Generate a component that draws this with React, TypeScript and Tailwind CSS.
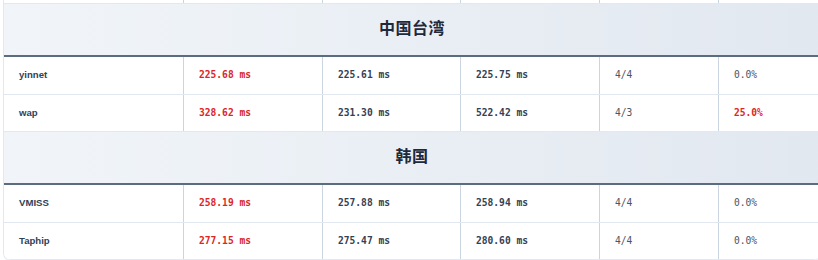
import React from "react";

type Row = {
  name: string;
  avg: string;
  min: string;
  max: string;
  recv: string;
  loss: string;
  lossBad?: boolean;
};

type Section = { title: string; rows: Row[] };

const sections: Section[] = [
  {
    title: "中国台湾",
    rows: [
      { name: "yinnet", avg: "225.68 ms", min: "225.61 ms", max: "225.75 ms", recv: "4/4", loss: "0.0%" },
      { name: "wap", avg: "328.62 ms", min: "231.30 ms", max: "522.42 ms", recv: "4/3", loss: "25.0%", lossBad: true },
    ],
  },
  {
    title: "韩国",
    rows: [
      { name: "VMISS", avg: "258.19 ms", min: "257.88 ms", max: "258.94 ms", recv: "4/4", loss: "0.0%" },
      { name: "Taphip", avg: "277.15 ms", min: "275.47 ms", max: "280.60 ms", recv: "4/4", loss: "0.0%" },
    ],
  },
];

const cols = "grid grid-cols-[180px_139px_138px_139px_119px_1fr]";
const cell = "flex items-center pl-[15px] border-r border-[#cbd5e1] last:border-r-0";
const mono = "font-['DejaVu_Sans_Mono',monospace] text-[9.6px]";

function DataRow({ r }: { r: Row }) {
  return (
    <div className={`${cols} h-[37.5px] border-b border-[#e2e8f0] bg-white`}>
      <div className={`${cell} font-['Liberation_Sans',Arial,sans-serif] text-[9.6px] font-bold text-[#334155]`}>
        {r.name}
      </div>
      <div className={`${cell} ${mono} font-bold text-[#dc2626]`}>{r.avg}</div>
      <div className={`${cell} ${mono} font-bold text-[#334155]`}>{r.min}</div>
      <div className={`${cell} ${mono} font-bold text-[#334155]`}>{r.max}</div>
      <div className={`${cell} ${mono} text-[#4b5563]`}>{r.recv}</div>
      <div className={`${cell} ${mono} ${r.lossBad ? "font-bold text-[#dc2626]" : "text-[#4b5563]"}`}>
        {r.loss}
      </div>
    </div>
  );
}

export default function App() {
  return (
    <div className="w-[818px] h-[260px] overflow-hidden bg-white">
      <div className="ml-[3px] w-[818px] border-x border-b border-[#e2e8f0] rounded-b-lg overflow-hidden">
        {/* tail of the previous section */}
        <div className={`${cols} h-[4px] border-b border-[#e2e8f0]`}>
          <div className="border-r border-[#cbd5e1]" />
          <div className="border-r border-[#cbd5e1]" />
          <div className="border-r border-[#cbd5e1]" />
          <div className="border-r border-[#cbd5e1]" />
          <div className="border-r border-[#cbd5e1]" />
          <div />
        </div>
        {sections.map((s) => (
          <div key={s.title}>
            <div className="h-[53px] pb-[5px] flex items-center justify-center bg-gradient-to-r from-[#f1f5f9] to-[#e2e8f0] border-b-2 border-[#5b6b80]">
              <span className="font-['Noto_Sans_CJK_SC',sans-serif] text-[16px] font-bold text-[#1e293b] tracking-[0.5px]">
                {s.title}
              </span>
            </div>
            {s.rows.map((r) => (
              <DataRow key={r.name} r={r} />
            ))}
          </div>
        ))}
      </div>
    </div>
  );
}
